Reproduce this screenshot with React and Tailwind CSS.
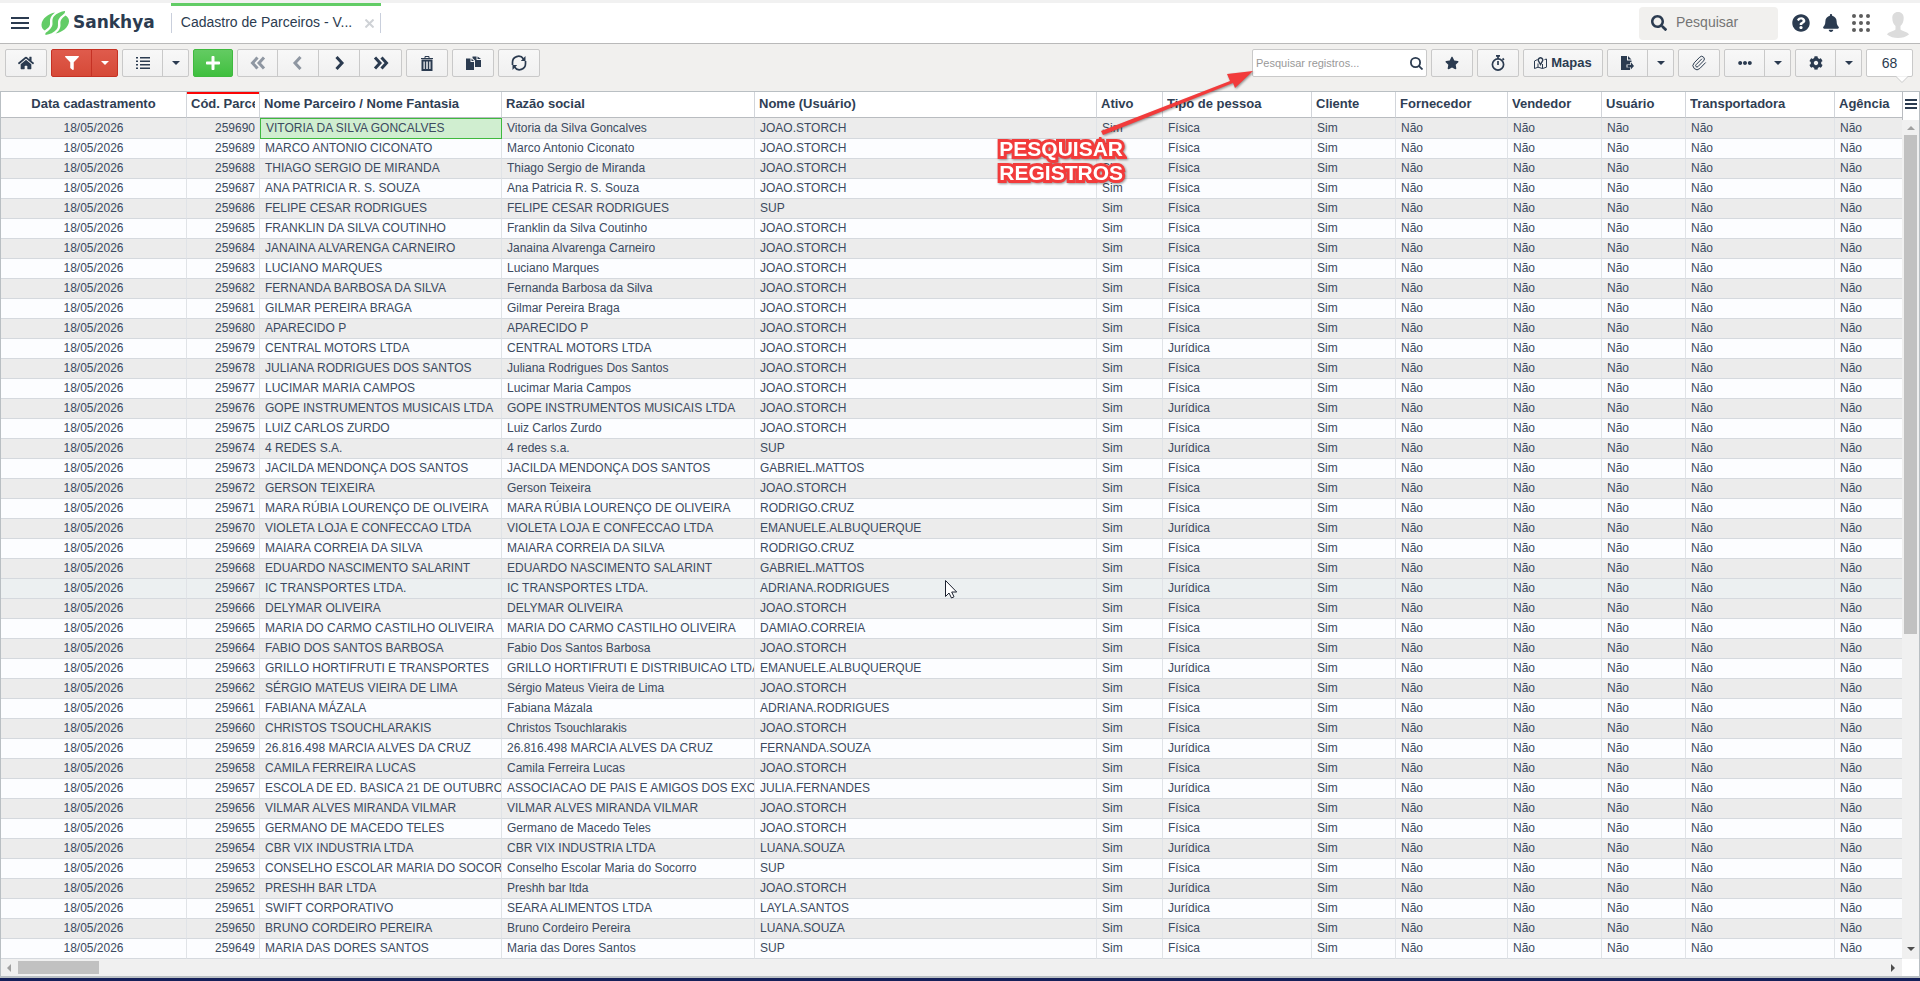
import React, { useState } from 'react';
import { FaHome, FaFilter, FaPlus, FaStar, FaQuestionCircle, FaBell, FaSearch, FaCog, FaEllipsisH } from 'react-icons/fa';
import { Paperclip } from 'lucide-react';

const columns = [
  { id: 'data', label: 'Data cadastramento', width: 'w-[186px]', align: 'text-center' },
  { id: 'codigo', label: 'Cód. Parceiro', width: 'w-[73px]', align: 'text-right' },
  { id: 'nome', label: 'Nome Parceiro / Nome Fantasia', width: 'w-[242px]' },
  { id: 'razao', label: 'Razão social', width: 'w-[253px]' },
  { id: 'usuario', label: 'Nome (Usuário)', width: '' },
  { id: 'ativo', label: 'Ativo', width: 'w-[66px]' },
  { id: 'tipo', label: 'Tipo de pessoa', width: 'w-[149px]' },
  { id: 'cliente', label: 'Cliente', width: 'w-[84px]' },
  { id: 'fornecedor', label: 'Fornecedor', width: 'w-[112px]' },
  { id: 'vendedor', label: 'Vendedor', width: 'w-[94px]' },
  { id: 'ehUsuario', label: 'Usuário', width: 'w-[84px]' },
  { id: 'transportadora', label: 'Transportadora', width: 'w-[149px]' },
  { id: 'agencia', label: 'Agência', width: 'w-[67px]' },
];

// [nome, razao social, usuario, tipo de pessoa]
const parceiros = [
  ['VITORIA DA SILVA GONCALVES', 'Vitoria da Silva Goncalves', 'JOAO.STORCH', 'F'],
  ['MARCO ANTONIO CICONATO', 'Marco Antonio Ciconato', 'JOAO.STORCH', 'F'],
  ['THIAGO SERGIO DE MIRANDA', 'Thiago Sergio de Miranda', 'JOAO.STORCH', 'F'],
  ['ANA PATRICIA R. S. SOUZA', 'Ana Patricia R. S. Souza', 'JOAO.STORCH', 'F'],
  ['FELIPE CESAR RODRIGUES', 'FELIPE CESAR RODRIGUES', 'SUP', 'F'],
  ['FRANKLIN DA SILVA COUTINHO', 'Franklin da Silva Coutinho', 'JOAO.STORCH', 'F'],
  ['JANAINA ALVARENGA CARNEIRO', 'Janaina Alvarenga Carneiro', 'JOAO.STORCH', 'F'],
  ['LUCIANO MARQUES', 'Luciano Marques', 'JOAO.STORCH', 'F'],
  ['FERNANDA BARBOSA DA SILVA', 'Fernanda Barbosa da Silva', 'JOAO.STORCH', 'F'],
  ['GILMAR PEREIRA BRAGA', 'Gilmar Pereira Braga', 'JOAO.STORCH', 'F'],
  ['APARECIDO P', 'APARECIDO P', 'JOAO.STORCH', 'F'],
  ['CENTRAL MOTORS LTDA', 'CENTRAL MOTORS LTDA', 'JOAO.STORCH', 'J'],
  ['JULIANA RODRIGUES DOS SANTOS', 'Juliana Rodrigues Dos Santos', 'JOAO.STORCH', 'F'],
  ['LUCIMAR MARIA CAMPOS', 'Lucimar Maria Campos', 'JOAO.STORCH', 'F'],
  ['GOPE INSTRUMENTOS MUSICAIS LTDA', 'GOPE INSTRUMENTOS MUSICAIS LTDA', 'JOAO.STORCH', 'J'],
  ['LUIZ CARLOS ZURDO', 'Luiz Carlos Zurdo', 'JOAO.STORCH', 'F'],
  ['4 REDES S.A.', '4 redes s.a.', 'SUP', 'J'],
  ['JACILDA MENDONÇA DOS SANTOS', 'JACILDA MENDONÇA DOS SANTOS', 'GABRIEL.MATTOS', 'F'],
  ['GERSON TEIXEIRA', 'Gerson Teixeira', 'JOAO.STORCH', 'F'],
  ['MARA RÚBIA LOURENÇO DE OLIVEIRA', 'MARA RÚBIA LOURENÇO DE OLIVEIRA', 'RODRIGO.CRUZ', 'F'],
  ['VIOLETA LOJA E CONFECCAO LTDA', 'VIOLETA LOJA E CONFECCAO LTDA', 'EMANUELE.ALBUQUERQUE', 'J'],
  ['MAIARA CORREIA DA SILVA', 'MAIARA CORREIA DA SILVA', 'RODRIGO.CRUZ', 'F'],
  ['EDUARDO NASCIMENTO SALARINT', 'EDUARDO NASCIMENTO SALARINT', 'GABRIEL.MATTOS', 'F'],
  ['IC TRANSPORTES LTDA.', 'IC TRANSPORTES LTDA.', 'ADRIANA.RODRIGUES', 'J'],
  ['DELYMAR OLIVEIRA', 'DELYMAR OLIVEIRA', 'JOAO.STORCH', 'F'],
  ['MARIA DO CARMO CASTILHO OLIVEIRA', 'MARIA DO CARMO CASTILHO OLIVEIRA', 'DAMIAO.CORREIA', 'F'],
  ['FABIO DOS SANTOS BARBOSA', 'Fabio Dos Santos Barbosa', 'JOAO.STORCH', 'F'],
  ['GRILLO HORTIFRUTI E TRANSPORTES', 'GRILLO HORTIFRUTI E DISTRIBUICAO LTDA', 'EMANUELE.ALBUQUERQUE', 'J'],
  ['SÉRGIO MATEUS VIEIRA DE LIMA', 'Sérgio Mateus Vieira de Lima', 'JOAO.STORCH', 'F'],
  ['FABIANA MÁZALA', 'Fabiana Mázala', 'ADRIANA.RODRIGUES', 'F'],
  ['CHRISTOS TSOUCHLARAKIS', 'Christos Tsouchlarakis', 'JOAO.STORCH', 'F'],
  ['26.816.498 MARCIA ALVES DA CRUZ', '26.816.498 MARCIA ALVES DA CRUZ', 'FERNANDA.SOUZA', 'J'],
  ['CAMILA FERREIRA LUCAS', 'Camila Ferreira Lucas', 'JOAO.STORCH', 'F'],
  ['ESCOLA DE ED. BASICA 21 DE OUTUBRO', 'ASSOCIACAO DE PAIS E AMIGOS DOS EXCEPCIONAIS', 'JULIA.FERNANDES', 'J'],
  ['VILMAR ALVES MIRANDA VILMAR', 'VILMAR ALVES MIRANDA VILMAR', 'JOAO.STORCH', 'F'],
  ['GERMANO DE MACEDO TELES', 'Germano de Macedo Teles', 'JOAO.STORCH', 'F'],
  ['CBR VIX INDUSTRIA LTDA', 'CBR VIX INDUSTRIA LTDA', 'LUANA.SOUZA', 'J'],
  ['CONSELHO ESCOLAR MARIA DO SOCORRO', 'Conselho Escolar Maria do Socorro', 'SUP', 'F'],
  ['PRESHH BAR LTDA', 'Preshh bar ltda', 'JOAO.STORCH', 'J'],
  ['SWIFT CORPORATIVO', 'SEARA ALIMENTOS LTDA', 'LAYLA.SANTOS', 'J'],
  ['BRUNO CORDEIRO PEREIRA', 'Bruno Cordeiro Pereira', 'LUANA.SOUZA', 'F'],
  ['MARIA DAS DORES SANTOS', 'Maria das Dores Santos', 'SUP', 'F'],
].map(([nome, razao, usuario, tipo], i) => ({
  data: '18/05/2026',
  codigo: 259690 - i,
  nome,
  razao,
  usuario,
  ativo: 'Sim',
  tipo: tipo === 'F' ? 'Física' : 'Jurídica',
  cliente: 'Sim',
  fornecedor: 'Não',
  vendedor: 'Não',
  ehUsuario: 'Não',
  transportadora: 'Não',
  agencia: 'Não',
}));

const HIGHLIGHTED_CODE = 259667;

function Caret({ className = '' }) {
  return (
    <svg className={`h-1 w-2 ${className}`} viewBox="0 0 8 4" fill="currentColor">
      <path d="M0 0h8L4 4z" />
    </svg>
  );
}

function Chevron({ double = false, flip = false }) {
  return (
    <svg className={`h-4 w-4 ${flip ? '-scale-x-100' : ''}`} viewBox="0 0 16 16" fill="none" stroke="currentColor" strokeWidth="3">
      {double ? <path d="M2 2.5L7 8l-5 5.5M8.500 2.5l5 5.500-5 5.500" /> : <path d="M5.500 2l5.500 6-5.500 6" />}
    </svg>
  );
}

// Group of joined toolbar buttons
function ButtonGroup({ children, tone = 'gray' }) {
  const tones = {
    gray: 'border-[#c9c9c9] divide-[#c9c9c9] from-[#f8f8f8] to-[#f0f0f0] text-[#2b3b50]',
    red: 'border-[#c53124] divide-[#c53124] from-[#df5b4c] to-[#d64937] text-white',
    green: 'border-[#3fb93f] divide-[#3fb93f] from-[#63cb62] to-[#3fc03e] text-white',
  };
  return (
    <div className={`flex h-7 shrink-0 divide-x overflow-hidden rounded-xs border bg-linear-to-b ${tones[tone]}`}>
      {children}
    </div>
  );
}

function ToolButton({ label, width = 'w-10', children }) {
  return (
    <button type="button" aria-label={label} className={`flex items-center justify-center ${width}`}>
      {children}
    </button>
  );
}

function Logo() {
  return (
    <a href="#" className="flex items-center gap-1 text-[#2b3b50]">
      <svg className="h-6 w-7" viewBox="0 0 28 24" fill="#62cc66">
        <path d="M14 1.500C7.500 2.500 1 7.500.500 13.500c-.2 3 1.300 4.800 3.300 6 1.500-1.200 3.500-2.300 4.600-4.200 1.300-2.300.2-4.300.700-6.800C9.600 5.500 11.800 3.200 14 1.500z" />
        <path d="M24 0c-3.800.4-8.500 2.200-11 5.300-2.200 2.700-1.300 4.900-1.500 7.600-.2 3.500-3.300 6-6.500 8.600-.6.500-.9 1.600-.4 2.500 4-.4 8.500-2.400 10.900-5.400 2.100-2.700 1.300-5 1.500-7.700.2-3.400 3.200-5.900 6.300-8.400.6-.6.900-1.600.7-2.500z" />
        <path d="M24.500 4.500c-1.700 1.300-3.500 2.600-4.500 4.500-1.200 2.300-.2 4.400-.7 6.900-.6 2.900-2.600 5-4.800 6.700C21 21.500 27.500 16.500 28 10.500c.1-3-1.400-4.800-3.500-6z" />
      </svg>
      <span className="pb-0.5 font-['DejaVu_Sans',sans-serif] text-[17px] leading-5 font-bold">Sankhya</span>
    </a>
  );
}

function AppHeader() {
  return (
    <header className="flex h-10 items-stretch bg-white pr-2.5 pl-[11px] text-[#2b3b50]">
      <button type="button" aria-label="Menu" className="flex w-[18px] flex-col justify-center gap-[3px]">
        <span className="h-0.5 w-full bg-current" />
        <span className="h-0.5 w-full bg-current" />
        <span className="h-0.5 w-full bg-current" />
      </button>
      <div className="ml-3 flex items-center">
        <Logo />
      </div>
      <div className="ml-4 flex w-[210px] flex-col border-t-3 border-[#62cc66]">
        <div className="mt-[7px] flex h-5 items-center justify-between border-x border-[#c9cfdc] pr-1.5 pl-[9px]">
          <a href="#" className="pb-0.5 text-sm leading-[18px]">Cadastro de Parceiros - V...</a>
          <button type="button" aria-label="Fechar aba">
            <svg className="h-[9px] w-[9px]" viewBox="0 0 9 9" stroke="#cfd2d6" strokeWidth="2">
              <path d="M.5.5l8 8M8.500.5l-8 8" />
            </svg>
          </button>
        </div>
      </div>

      <div className="ml-auto flex items-center">
        <label className="flex h-[33px] w-[139px] items-center gap-[9px] rounded bg-[#f1f0ee] px-3">
          <FaSearch className="h-4 w-4 shrink-0" />
          <input type="search" aria-label="Pesquisar" placeholder="Pesquisar" className="w-full min-w-0 pb-0.5 text-sm leading-[18px] outline-none placeholder:text-[#757575]" />
        </label>
        <button type="button" aria-label="Ajuda" className="ml-3.5">
          <FaQuestionCircle className="h-[18px] w-[18px]" />
        </button>
        <button type="button" aria-label="Notificações" className="ml-3">
          <FaBell className="h-[18px] w-[18px]" />
        </button>
        <button type="button" aria-label="Aplicativos" className="ml-3">
          <svg className="h-[18px] w-[18px]" viewBox="0 0 18 18" fill="#5d5d5d">
            {[2, 9, 16].map((y) => [2, 9, 16].map((x) => <circle key={`${x}-${y}`} cx={x} cy={y} r="2" />))}
          </svg>
        </button>
        <button type="button" aria-label="Perfil" className="ml-4 pt-1">
          <svg className="h-[26px] w-6" viewBox="0 0 24 26" fill="#dcdcdc">
            <path d="M12 0c-3.600 0-5.700 2.400-5.700 6 0 3.200 1.300 6.500 3.200 8v3.500C7 19.500 2.500 19.500 1 22.500 4 25 8 26 12 26s8-1 11-3.500c-1.500-3-6-3-8.500-5V14c1.900-1.500 3.200-4.800 3.200-8 0-3.600-2.100-6-5.700-6z" />
          </svg>
        </button>
      </div>
    </header>
  );
}

function Toolbar() {
  const [query, setQuery] = useState('');

  return (
    <div className="flex items-start gap-1 border-t border-[#b9b9b9] bg-[#f1f0ee] pt-[5px] pr-[7px] pb-3.5 pl-[5px] text-[#2b3b50]">
      <ButtonGroup>
        <ToolButton label="Início"><FaHome className="h-4 w-4" /></ToolButton>
      </ButtonGroup>
      <ButtonGroup tone="red">
        <ToolButton label="Filtro"><FaFilter className="h-3.5 w-3.5" /></ToolButton>
        <ToolButton label="Opções de filtro" width="w-[25px]"><Caret /></ToolButton>
      </ButtonGroup>
      <ButtonGroup>
        <ToolButton label="Modo de exibição">
          <svg className="h-3 w-3.5" viewBox="0 0 14 12" fill="currentColor">
            <path d="M0 0h2v1.500H0zM4 0h10v1.500H4zM0 3.500h2V5H0zM4 3.500h10V5H4zM0 7h2v1.500H0zM4 7h10v1.500H4zM0 10.500h2V12H0zM4 10.500h10V12H4z" />
          </svg>
        </ToolButton>
        <ToolButton label="Opções de exibição" width="w-[25px]"><Caret /></ToolButton>
      </ButtonGroup>
      <ButtonGroup tone="green">
        <ToolButton label="Adicionar" width="w-[38px]"><FaPlus className="h-4 w-4" /></ToolButton>
      </ButtonGroup>
      <ButtonGroup>
        <ToolButton label="Primeiro"><span className="opacity-50"><Chevron double flip /></span></ToolButton>
        <ToolButton label="Anterior" width="w-[41px]"><span className="opacity-50"><Chevron flip /></span></ToolButton>
        <ToolButton label="Próximo" width="w-[41px]"><Chevron /></ToolButton>
        <ToolButton label="Último" width="w-[41px]"><Chevron double /></ToolButton>
      </ButtonGroup>
      <ButtonGroup>
        <ToolButton label="Excluir">
          <svg className="h-[15px] w-3" viewBox="0 0 12 15" fill="none" stroke="currentColor">
            <path d="M4 2V.5h4V2M0 2.500h12" />
            <path d="M1.500 4.500h9v9.500h-9z" strokeWidth="2" />
            <path d="M4.500 5v9M7.500 5v9" strokeWidth="1.500" />
          </svg>
        </ToolButton>
      </ButtonGroup>
      <ButtonGroup>
        <ToolButton label="Duplicar">
          <svg className="h-3.5 w-[15px]" viewBox="0 0 15 14" fill="currentColor">
            <path d="M0 2.500h4.500V6H8v8H0zM5.500 2.500L8 5H5.500zM6.500.500h4V4H15v7H9V4.500L6.500 2zM11.500.500L15 3h-3.500z" />
          </svg>
        </ToolButton>
      </ButtonGroup>
      <ButtonGroup>
        <ToolButton label="Atualizar">
          <svg className="h-4 w-4" viewBox="0 0 16 16" fill="none" stroke="currentColor" strokeWidth="1.700">
            <path d="M1.500 10V7.500A6 6 0 0 1 12.500 4M14.500 6v2.500A6 6 0 0 1 3.500 12" />
            <path d="M14.500 1v5H9.800zM1.500 15v-5h4.700z" fill="currentColor" stroke="none" />
          </svg>
        </ToolButton>
      </ButtonGroup>

      <label className="ml-auto flex h-7 w-[175px] items-center rounded-xs border border-[#c9c9c9] bg-white pr-[3px] pl-[3px]">
        <input
          type="text"
          aria-label="Pesquisar registros"
          value={query}
          onChange={(e) => setQuery(e.target.value)}
          placeholder="Pesquisar registros..."
          className="w-full min-w-0 text-[11px] outline-none placeholder:text-[#999]"
        />
        <svg className="h-[13px] w-[13px] shrink-0" viewBox="0 0 13 13" fill="none" stroke="currentColor" strokeWidth="1.800">
          <circle cx="5.500" cy="5.500" r="4.600" />
          <path d="M8.800 8.800l3.700 3.700" />
        </svg>
      </label>
      <ButtonGroup>
        <ToolButton label="Favoritos"><FaStar className="h-3.5 w-3.5" /></ToolButton>
      </ButtonGroup>
      <ButtonGroup>
        <ToolButton label="Agendamento">
          <svg className="h-4 w-3.5" viewBox="0 0 14 16" fill="none" stroke="currentColor" strokeWidth="1.700">
            <circle cx="7" cy="9.500" r="5.600" />
            <path d="M5 .9h4M7 1v3M7 6v4M11.500 3.500l1.500 1.300" />
          </svg>
        </ToolButton>
      </ButtonGroup>
      <ButtonGroup>
        <button type="button" className="flex w-[78px] items-center justify-center gap-1 text-[13px] font-bold">
          <svg className="h-3 w-[13px]" viewBox="0 0 13 12" fill="none" stroke="currentColor">
            <path d="M3.500 2.500L.5 4v7.500l3.500-1.300 4.500 1.300 4-1.300V2l-2 .6M4 6.500v3.700M8.500 7v4.500" />
            <path d="M6.500 7.500L4.600 4.200a2.200 2.200 0 1 1 3.800 0z" strokeWidth="1.400" />
          </svg>
          Mapas
        </button>
      </ButtonGroup>
      <ButtonGroup>
        <ToolButton label="Exportar">
          <svg className="h-3.5 w-[13px]" viewBox="0 0 13 14" fill="currentColor">
            <path d="M0 0h6v4.500h4.500V6H9v2.500H5.500v3H9V14H0zM7 0l3.500 3.500H7zM9.800 6L13 10l-3.200 3.500V11.200H6.500V9h3.300z" />
          </svg>
        </ToolButton>
        <ToolButton label="Opções de exportação" width="w-[25px]"><Caret /></ToolButton>
      </ButtonGroup>
      <ButtonGroup>
        <ToolButton label="Anexos"><Paperclip className="h-4 w-4" strokeWidth={1.5} /></ToolButton>
      </ButtonGroup>
      <ButtonGroup>
        <ToolButton label="Mais opções"><FaEllipsisH className="h-3.5 w-3.5" /></ToolButton>
        <ToolButton label="Abrir mais opções" width="w-[25px]"><Caret /></ToolButton>
      </ButtonGroup>
      <ButtonGroup>
        <ToolButton label="Configurações"><FaCog className="h-3.5 w-3.5" /></ToolButton>
        <ToolButton label="Opções de configuração" width="w-[25px]"><Caret /></ToolButton>
      </ButtonGroup>
      <div className="relative flex h-7 w-[47px] items-center justify-center rounded-xs border border-[#c9c9c9] bg-white text-sm">
        68
        <svg className="absolute top-[26px] right-1 h-[7px] w-3" viewBox="0 0 12 7" fill="#fff" stroke="#c9c9c9">
          <path d="M0 .5l6 6 6-6" />
          <path d="M1 0h10" stroke="#fff" />
        </svg>
      </div>
    </div>
  );
}

function PartnersTable({ selected, setSelected }) {
  return (
    <table className="w-full table-fixed border-separate border-spacing-0 text-xs text-[#3b4a60]">
      <colgroup>
        {columns.map((col) => <col key={col.id} className={col.width} />)}
      </colgroup>
      <thead>
        <tr>
          {columns.map((col) => (
            <th
              key={col.id}
              className={`h-[26px] overflow-hidden border-r border-b border-r-[#d2d5da] border-b-[#b9bcc0] bg-white p-0 px-1 pb-px text-[13px] leading-4 font-bold whitespace-nowrap text-[#2f3e54] last:border-r-0 ${
                col.id === 'data' ? 'text-center' : 'text-left'
              } ${col.id === 'codigo' ? 'shadow-[inset_0_2px_0_#fb0505]' : ''}`}
            >
              <div className="overflow-hidden">{col.label}</div>
            </th>
          ))}
        </tr>
      </thead>
      <tbody>
        {parceiros.map((row) => (
          <tr
            key={row.codigo}
            onClick={() => setSelected(row.codigo)}
            className={row.codigo === HIGHLIGHTED_CODE ? 'bg-[#ecf0f1]' : 'odd:bg-[#ececec] even:bg-[#fcfdff]'}
          >
            {columns.map((col) => (
              <td
                key={col.id}
                className={`h-5 overflow-hidden p-0 leading-[19px] whitespace-nowrap ${
                  col.id === 'nome' && row.codigo === selected
                    ? 'border border-[#3fb93f] bg-[#d0eed0] pl-1'
                    : 'border-r border-b border-r-[#e0e3e7] border-b-[#d5d9de] last:border-r-0'
                } ${col.align || 'pl-[5px]'} ${col.id === 'codigo' ? 'pr-1' : ''}`}
              >
                {row[col.id]}
              </td>
            ))}
          </tr>
        ))}
      </tbody>
    </table>
  );
}

// Red callout and arrow that point to the record search box
function SearchCallout() {
  return (
    <div className="pointer-events-none">
      <svg className="absolute top-[66px] right-[665px] h-[70px] w-[156px] drop-shadow-[1px_1px_1px_rgba(0,0,0,0.4)]" viewBox="0 0 156 70" fill="#f23b3b">
        <path d="M2 65l129-50-3-7 26-3-18 17-2-5L4 69z" />
      </svg>
      <p className="absolute top-[137px] right-[797px] text-left text-[21px] leading-6 font-bold text-white [-webkit-text-stroke:6px_#f23b3b] [paint-order:stroke_fill] drop-shadow-[1px_1px_1px_rgba(0,0,0,0.4)]">
        PESQUISAR
        <br />
        REGISTROS
      </p>
      <svg className="absolute top-[579px] left-[944px] h-5 w-[14px]" viewBox="0 0 14 20" fill="#fff" stroke="#1c2230">
        <path d="M1.500 1.500v16l3.500-3.500 2.500 5 2.500-1.200-2.300-4.800h5z" />
      </svg>
    </div>
  );
}

export default function App() {
  const [selected, setSelected] = useState(259690);

  return (
    <div className="relative flex min-h-screen flex-col bg-[#15205a] font-['Liberation_Sans',Arial,sans-serif]">
      <div className="h-[3px] bg-[#f1f1f1]" />
      <AppHeader />
      <Toolbar />

      <main className="flex border border-b-2 border-[#b9bfc3] bg-white">
        <div className="flex min-w-0 flex-1 flex-col">
          <PartnersTable selected={selected} setSelected={setSelected} />
          <div className="flex h-[17px] items-center justify-between bg-[#f0f0f0] pr-[5px] pl-1 text-[#4d4d4d]">
            <div className="flex items-center gap-[5px]">
              <Caret className="rotate-90 text-[#a0a0a0]" />
              <div className="h-[13px] w-[81px] bg-[#c1c1c1]" />
            </div>
            <Caret className="-rotate-90" />
          </div>
        </div>
        <div className="flex w-[17px] flex-col">
          <button type="button" aria-label="Configurar colunas" className="flex h-7 flex-col items-center justify-center gap-[2px] border-l border-[#b9bcc0] bg-white pb-1">
            <span className="h-[2px] w-3 bg-[#2b3b50]" />
            <span className="h-[2px] w-3 bg-[#2b3b50]" />
            <span className="h-[2px] w-3 bg-[#2b3b50]" />
          </button>
          <div className="flex flex-1 flex-col items-center bg-[#f0f0f0] text-[#4d4d4d]">
            <Caret className="mt-1.5 rotate-180 text-[#a0a0a0]" />
            <div className="mt-[5px] h-[499px] w-[13px] bg-[#c1c1c1]" />
            <Caret className="mt-auto mb-2" />
          </div>
          <div className="h-[17px] bg-white" />
        </div>
      </main>
      <div className="min-h-0.5 flex-1" />

      <SearchCallout />
    </div>
  );
}
